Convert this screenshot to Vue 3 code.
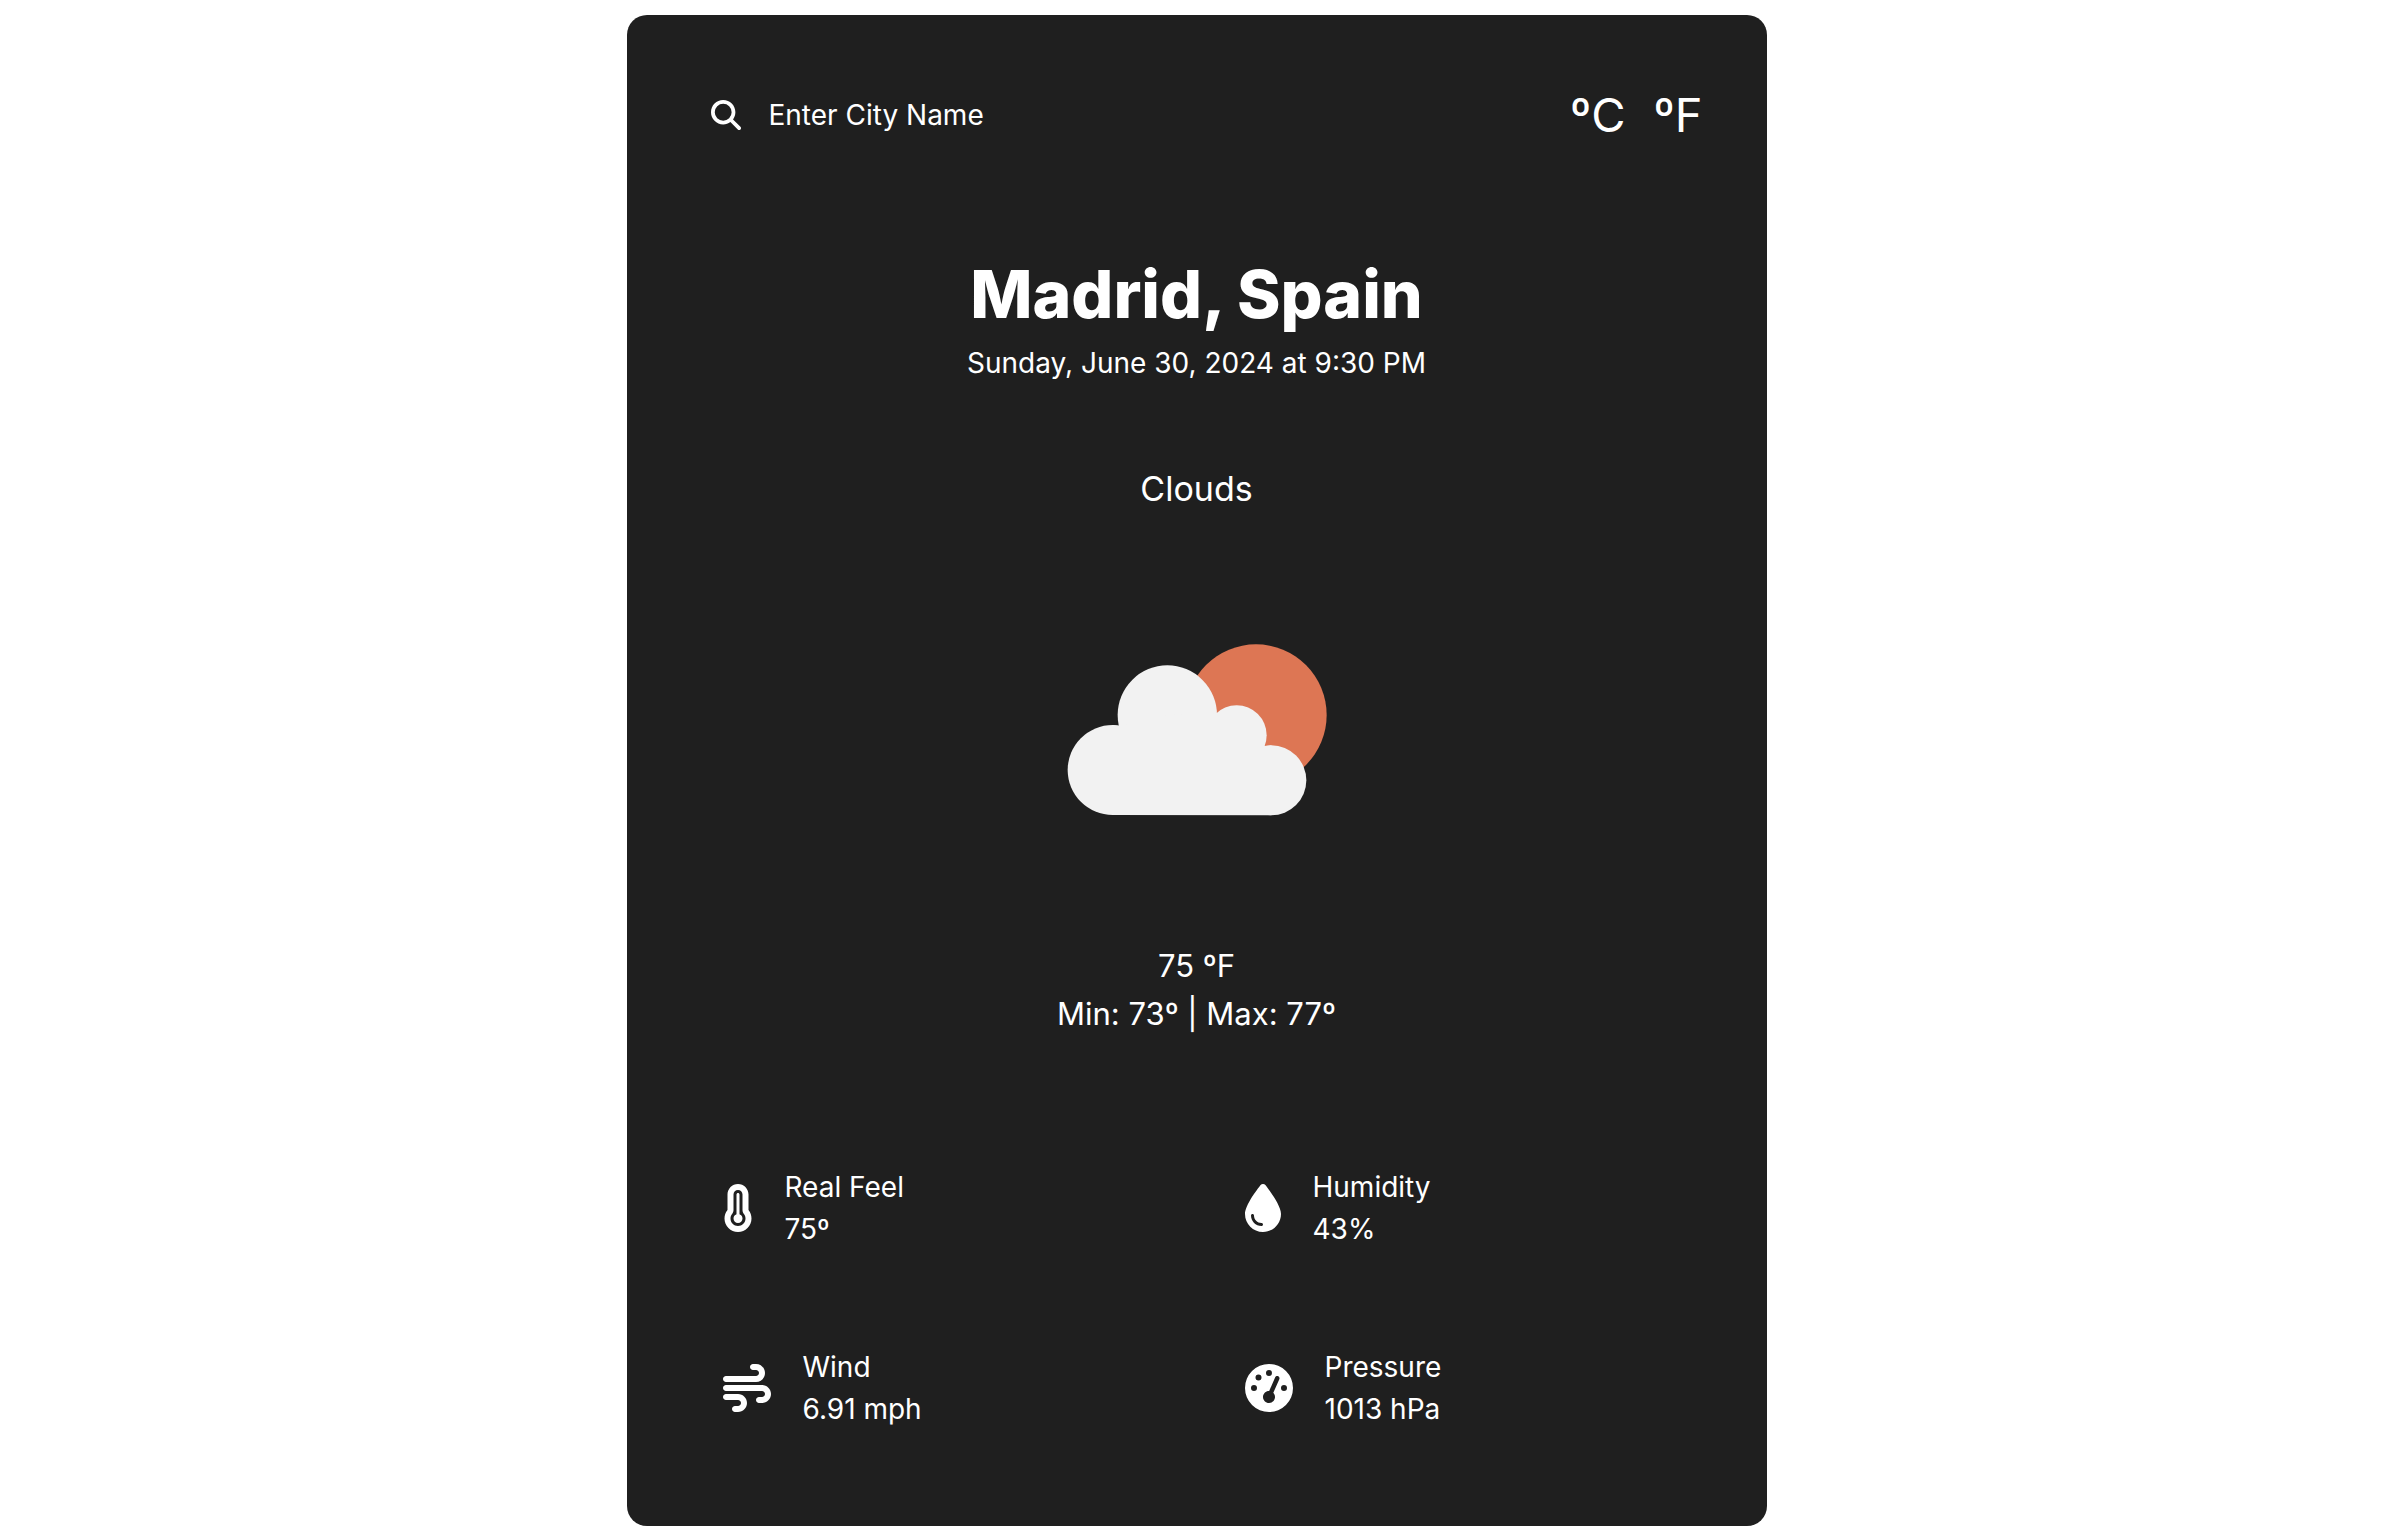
<script setup>
import { ref } from 'vue'

const city = ref('')

const details = [
  {
    label: 'Real Feel',
    value: '75º',
    width: 320,
    path: 'M160 64c-26.5 0-48 21.5-48 48V276.5c0 17.3-7.1 31.9-15.3 42.5C86.2 332.6 80 349.5 80 368c0 44.2 35.8 80 80 80s80-35.8 80-80c0-18.5-6.2-35.4-16.7-48.9c-8.2-10.6-15.3-25.2-15.3-42.5V112c0-26.5-21.5-48-48-48zM48 112C48 50.2 98.1 0 160 0s112 50.1 112 112V276.5c0 .1 .1 .3 .2 .6c.2 .6 .8 1.6 1.7 2.8c18.9 24.4 30.1 55 30.1 88.1c0 79.5-64.5 144-144 144S16 447.5 16 368c0-33.2 11.2-63.8 30.1-88.1c.9-1.2 1.5-2.2 1.7-2.8c.1-.3 .2-.5 .2-.6V112zM208 368c0 26.5-21.5 48-48 48s-48-21.5-48-48c0-20.9 13.4-38.7 32-45.3V112c0-8.8 7.2-16 16-16s16 7.2 16 16V322.7c18.6 6.6 32 24.4 32 45.3z'
  },
  {
    label: 'Humidity',
    value: '43%',
    width: 384,
    path: 'M192 512C86 512 0 426 0 320C0 228.8 130.2 57.7 166.6 11.7C172.6 4.2 181.5 0 191.1 0h1.8c9.6 0 18.5 4.2 24.5 11.7C253.8 57.7 384 228.8 384 320c0 106-86 192-192 192zM96 336c0-8.8-7.2-16-16-16s-16 7.2-16 16c0 61.9 50.1 112 112 112c8.8 0 16-7.2 16-16s-7.2-16-16-16c-44.2 0-80-35.8-80-80z'
  },
  {
    label: 'Wind',
    value: '6.91 mph',
    width: 512,
    path: 'M288 32c0 17.7 14.3 32 32 32h32c17.7 0 32 14.3 32 32s-14.3 32-32 32H32c-17.7 0-32 14.3-32 32s14.3 32 32 32H352c53 0 96-43 96-96s-43-96-96-96H320c-17.7 0-32 14.3-32 32zm64 352c0 17.7 14.3 32 32 32h32c53 0 96-43 96-96s-43-96-96-96H32c-17.7 0-32 14.3-32 32s14.3 32 32 32H416c17.7 0 32 14.3 32 32s-14.3 32-32 32H384c-17.7 0-32 14.3-32 32zM128 512h32c53 0 96-43 96-96s-43-96-96-96H32c-17.7 0-32 14.3-32 32s14.3 32 32 32H160c17.7 0 32 14.3 32 32s-14.3 32-32 32H128c-17.7 0-32 14.3-32 32s14.3 32 32 32z'
  },
  {
    label: 'Pressure',
    value: '1013 hPa',
    width: 512,
    path: 'M0 256a256 256 0 1 1 512 0A256 256 0 1 1 0 256zM288 96a32 32 0 1 0 -64 0 32 32 0 1 0 64 0zM256 416c35.3 0 64-28.7 64-64c0-17.4-6.9-33.1-18.1-44.6L366 161.7c5.3-12.1-.2-26.3-12.3-31.6s-26.3 .2-31.6 12.3L257.9 288c-.6 0-1.3 0-1.9 0c-35.3 0-64 28.7-64 64s28.7 64 64 64zM176 144a32 32 0 1 0 -64 0 32 32 0 1 0 64 0zM96 288a32 32 0 1 0 0-64 32 32 0 1 0 0 64zm352-32a32 32 0 1 0 -64 0 32 32 0 1 0 64 0z'
  }
]
</script>

<template>
  <main class="card">
    <header class="toolbar">
      <form class="search" @submit.prevent>
        <button class="search-button" type="submit" aria-label="Search">
          <svg class="search-icon" viewBox="0 0 512 512" aria-hidden="true">
            <path d="M416 208c0 45.9-14.9 88.3-40 122.7L502.6 457.4c12.5 12.5 12.5 32.8 0 45.3s-32.8 12.5-45.3 0L330.7 376c-34.4 25.2-76.8 40-122.7 40C93.1 416 0 322.9 0 208S93.1 0 208 0S416 93.1 416 208zM208 352a144 144 0 1 0 0-288 144 144 0 1 0 0 288z" />
          </svg>
        </button>
        <input v-model="city" class="search-input" type="text" placeholder="Enter City Name" aria-label="City name" />
      </form>
      <div class="units">
        <button class="unit" type="button">ºC</button>
        <button class="unit" type="button">ºF</button>
      </div>
    </header>

    <section class="summary">
      <h1 class="city">Madrid, Spain</h1>
      <p class="date">Sunday, June 30, 2024 at 9:30 PM</p>
      <p class="condition">Clouds</p>
      <svg class="weather" viewBox="78 70 780 516" role="img" aria-label="Cloudy with sun">
        <circle cx="645" cy="283" r="212" fill="#dd7654" />
        <g fill="#f2f2f2">
          <circle cx="379" cy="283" r="149" />
          <circle cx="215" cy="448" r="135" />
          <circle cx="587" cy="344" r="90" />
          <circle cx="691" cy="479" r="105" />
          <polygon points="215,313 235,317 379,283 528,277 587,344 673,376 691,374 691,584 215,583" />
        </g>
      </svg>
      <p class="reading">75 ºF</p>
      <p class="reading">Min: 73º | Max: 77º</p>
    </section>

    <section class="details">
      <div v-for="item in details" :key="item.label" class="detail">
        <svg class="detail-icon" :viewBox="`0 0 ${item.width} 512`" aria-hidden="true">
          <path :d="item.path" />
        </svg>
        <div class="detail-text">
          <p>{{ item.label }}</p>
          <p>{{ item.value }}</p>
        </div>
      </div>
    </section>
  </main>
</template>

<style>
body {
  background: #fff;
}
</style>

<style scoped>
.card {
  box-sizing: border-box;
  width: 100%;
  max-width: 1140px;
  margin: 15px auto 10px;
  padding: 64px 64px 96px;
  border-radius: 20px;
  background: #1f1f1f;
  color: #fff;
  font-family: Inter, "Liberation Sans", sans-serif;
  font-size: 28px;
  line-height: 42px;
}

p,
h1 {
  margin: 0;
}

svg {
  display: block;
  flex: none;
}

path {
  fill: #fff;
}

button,
input {
  padding: 0;
  border: 0;
  background: none;
  color: inherit;
  font: inherit;
}

.toolbar {
  display: flex;
  align-items: center;
  justify-content: space-between;
  padding-left: 20px;
}

.search {
  display: flex;
  flex: 1;
  align-items: center;
  gap: 28px;
}

.search-icon {
  width: 30px;
  height: 30px;
}

.search-input {
  flex: 1;
  min-width: 0;
  max-width: 400px;
  outline: 0;
}

.search-input::placeholder {
  color: #fff;
  opacity: 1;
}

.units {
  display: flex;
  gap: 28px;
}

.unit {
  font-size: 47px;
  line-height: 72px;
  cursor: pointer;
}

.summary {
  display: flex;
  flex-direction: column;
  align-items: center;
  margin-top: 95px;
  text-align: center;
}

.city {
  font-size: 66px;
  font-weight: 800;
  line-height: 96px;
}

.condition,
.reading {
  line-height: 48px;
}

.condition {
  margin-top: 81px;
  font-size: 34px;
}

.reading {
  font-size: 31px;
}

.weather {
  width: 260px;
  height: 172px;
  margin: 131px 0 126px;
}

.details {
  display: grid;
  grid-template-columns: 1fr 1fr;
  gap: 96px;
  margin-top: 128px;
  padding: 0 32px;
}

.detail {
  display: flex;
  align-items: center;
  gap: 32px;
}

.detail-icon {
  height: 48px;
}
</style>
